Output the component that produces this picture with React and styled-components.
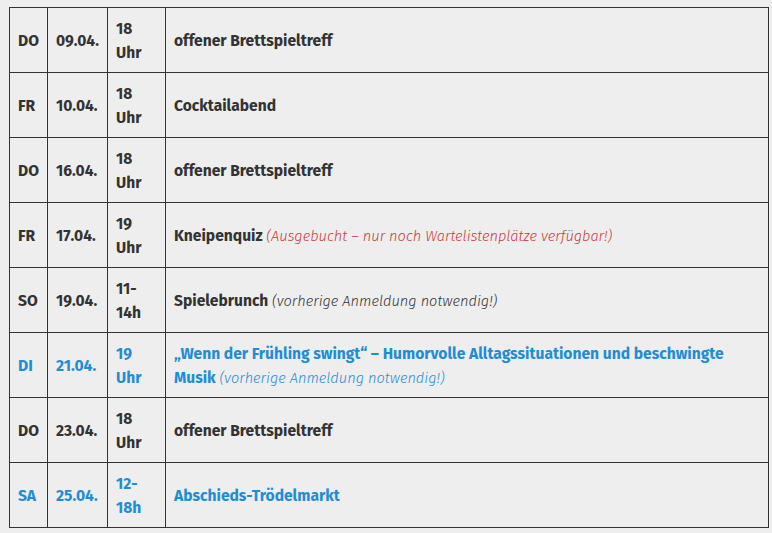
import React from "react";
import styled, { createGlobalStyle } from "styled-components";

const Global = createGlobalStyle`
  html, body { margin: 0; padding: 0; background: #eeeeee; }
  body { font-family: "Fira Sans", "Open Sans", "Noto Sans", sans-serif; color: #333; }
`;

const Wrap = styled.div`
  padding: 7px 4px 0 9px;
`;

const Table = styled.table`
  border-collapse: collapse;
  width: 760px;
  table-layout: fixed;
  font-size: 15.6px;
  line-height: 24px;
`;

const Row = styled.tr`
  height: 65px;
  color: ${(p) => (p.$blue ? "#1f8dd6" : "#333")};
`;

const Cell = styled.td`
  border: 1px solid #333;
  padding: 9px 8px 7px;
  font-weight: 700;
  vertical-align: middle;
  width: ${(p) => p.$w || "auto"};
`;

const Note = styled.em`
  font-weight: 300;
  font-style: italic;
  font-size: 14.6px;
  color: ${(p) => (p.$red ? "#c9383a" : "inherit")};
`;

const rows = [
  { d: "DO", date: "09.04.", t: "18 Uhr", title: "offener Brettspieltreff" },
  { d: "FR", date: "10.04.", t: "18 Uhr", title: "Cocktailabend" },
  { d: "DO", date: "16.04.", t: "18 Uhr", title: "offener Brettspieltreff" },
  { d: "FR", date: "17.04.", t: "19 Uhr", title: "Kneipenquiz", note: "(Ausgebucht – nur noch Wartelistenplätze verfügbar!)", red: true },
  { d: "SO", date: "19.04.", t: "11-14h", title: "Spielebrunch", note: "(vorherige Anmeldung notwendig!)" },
  { d: "DI", date: "21.04.", t: "19 Uhr", title: "„Wenn der Frühling swingt“ – Humorvolle Alltagssituationen und beschwingte Musik", note: "(vorherige Anmeldung notwendig!)", blue: true },
  { d: "DO", date: "23.04.", t: "18 Uhr", title: "offener Brettspieltreff" },
  { d: "SA", date: "25.04.", t: "12-18h", title: "Abschieds-Trödelmarkt", blue: true },
];

export default function App() {
  return (
    <>
      <Global />
      <Wrap>
        <Table>
          <tbody>
            {rows.map((r, i) => (
              <Row key={i} $blue={r.blue}>
                <Cell $w="21px">{r.d}</Cell>
                <Cell $w="43px">{r.date}</Cell>
                <Cell $w="41px">{r.t}</Cell>
                <Cell>
                  {r.title}
                  {r.note && (
                    <>
                      {" "}
                      <Note $red={r.red}>{r.note}</Note>
                    </>
                  )}
                </Cell>
              </Row>
            ))}
          </tbody>
        </Table>
      </Wrap>
    </>
  );
}
